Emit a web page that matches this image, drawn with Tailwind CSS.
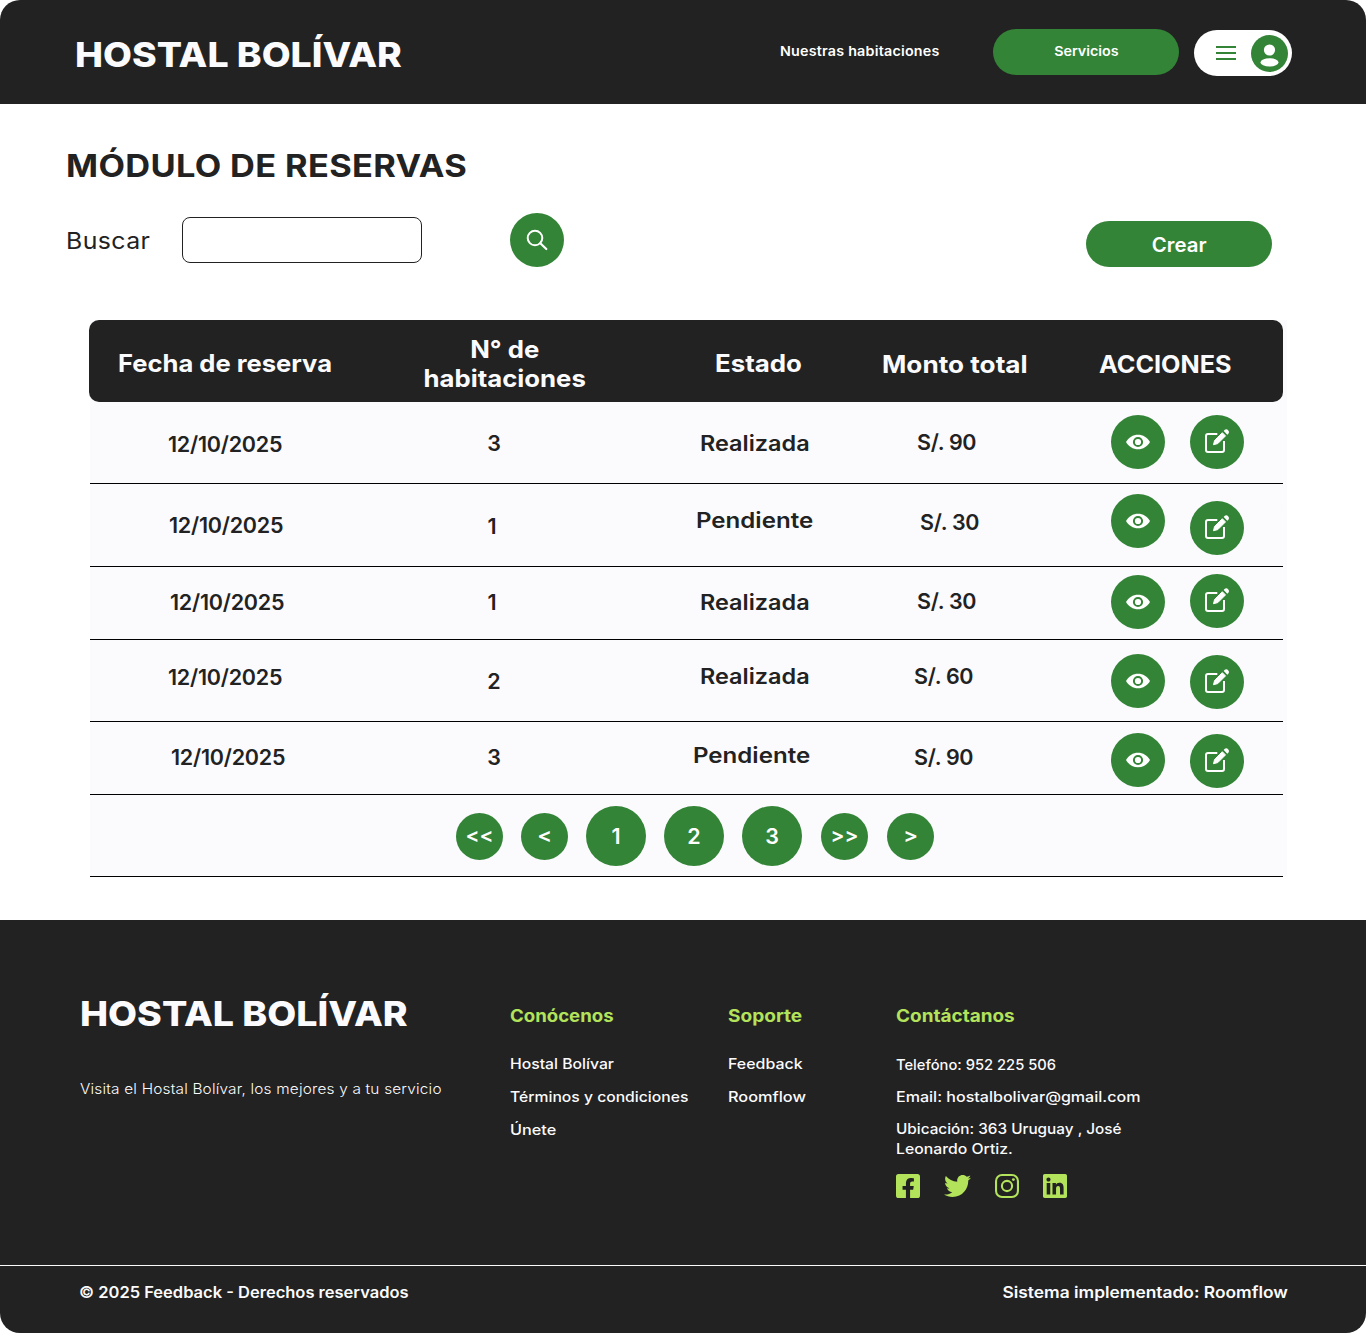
<!DOCTYPE html>
<html lang="es">
<head>
<meta charset="utf-8">
<title>Hostal Bolívar - Módulo de reservas</title>
<script src="https://cdn.jsdelivr.net/npm/@tailwindcss/browser@4"></script>
</head>
<body class="bg-white text-[#222222] font-[Inter,sans-serif]">

<!-- Shared row icons -->
<svg class="hidden" aria-hidden="true">
  <symbol id="eye" viewBox="0 0 54 54">
    <circle cx="27" cy="27" r="27" fill="#338437"/>
    <path d="M15 27C17.600 22.400 22 19.700 27 19.700S36.400 22.400 39 27C36.400 31.600 32 34.300 27 34.300S17.600 31.600 15 27Z" fill="#fff"/>
    <circle cx="27" cy="27" r="4.100" fill="#fff" stroke="#338437" stroke-width="2"/>
  </symbol>
  <symbol id="edit" viewBox="0 0 54 54">
    <circle cx="27" cy="27" r="27" fill="#338437"/>
    <path d="M27.300 19H18A2 2 0 0 0 16 21V35A2 2 0 0 0 18 37H32A2 2 0 0 0 34 35V26" fill="none" stroke="#fff" stroke-width="2"/>
    <path d="M23.500 29.700L24.600 25.400L32.300 17.700L35.500 20.900L27.800 28.600Z" fill="#fff" stroke="#fff" stroke-width="1" stroke-linejoin="round"/>
    <path d="M33.700 16.100L34.500 15.100A2.700 2.700 0 0 1 38.400 18.800L37.300 19.700Z" fill="#fff"/>
  </symbol>
</svg>

<div class="w-[1366px] h-[1333px] rounded-[20px] overflow-hidden flex flex-col bg-white">

  <header class="h-[104px] shrink-0 bg-[#222222] text-white flex items-start pl-[75px]">
    <h1 class="mt-[35px] w-[705px] text-[34.5px] leading-10 font-extrabold text-[#fbfbfe] whitespace-nowrap"><span class="inline-block origin-left scale-x-[1.085]">HOSTAL BOLÍVAR</span></h1>
    <a class="mt-[41px] w-[213px] text-[13.5px] leading-5 font-semibold whitespace-nowrap"><span class="inline-block origin-left scale-x-[1.06] tracking-[0.2px]">Nuestras habitaciones</span></a>
    <a class="mt-[29px] w-[186px] h-[46px] pb-0.5 rounded-full bg-[#338437] flex items-center justify-center text-[13.5px] font-semibold"><span class="inline-block scale-x-[1.06]">Servicios</span></a>
    <div class="mt-[30px] ml-[15px] w-[98px] h-[46px] rounded-full bg-white flex items-center justify-between pl-[22px] pr-[4.5px]">
      <svg class="w-5 h-[14px]" viewBox="0 0 20 14" fill="#338437"><rect width="20" height="2"/><rect y="6" width="20" height="2"/><rect y="12" width="20" height="2"/></svg>
      <svg class="size-[37px]" viewBox="0 0 37 37"><circle cx="18.500" cy="18.500" r="18.500" fill="#338437"/><circle cx="18.500" cy="15" r="5.600" fill="#fff"/><ellipse cx="18.500" cy="27.400" rx="9" ry="4.200" fill="#fff"/></svg>
    </div>
  </header>

  <main class="h-[816px] shrink-0">
    <h2 class="pt-[42px] pl-[66px] text-[31px] leading-10 font-bold"><span class="inline-block origin-left scale-x-[1.11] tracking-[0.3px]">MÓDULO DE RESERVAS</span></h2>

    <div class="mt-[23px] h-[111px] pl-[66px] flex items-start">
      <label class="mt-[17px] w-[116px] text-[23px] leading-[30px]"><span class="inline-block origin-left scale-x-[1.08] tracking-[0.4px]">Buscar</span></label>
      <input class="mt-2 w-[240px] h-[46px] border border-[#222222] rounded-lg bg-white">
      <button class="mt-1 ml-[88px] size-[54px] rounded-full bg-[#338437]">
        <svg viewBox="0 0 54 54" fill="none" stroke="#fff" stroke-width="2"><circle cx="25" cy="25" r="7.300"/><path d="M30.300 30.300L36.300 36" stroke-linecap="round" stroke-width="2.200"/></svg>
      </button>
      <button class="mt-3 ml-[522px] w-[186px] h-[46px] pt-[3px] rounded-full bg-[#338437] text-[19.5px] font-semibold text-white"><span class="inline-block scale-x-[1.045]">Crear</span></button>
    </div>

    <section class="ml-[89px] w-[1198px] bg-linear-to-r from-white from-[1px] to-[#fbfbfe] to-[1px]">
      <div class="w-[1194px] h-[82px] rounded-[10px] bg-[#222222] text-[#fbfbfe] text-[24px] leading-[29px] font-bold flex items-start whitespace-nowrap">
        <div class="mt-[29px] pl-[29px] w-[333px]"><span class="inline-block origin-left scale-x-[1.065]">Fecha de reserva</span></div>
        <div class="mt-[15px] w-[165px] text-center"><span class="inline-block scale-x-[1.072]">N° de<br>habitaciones</span></div>
        <div class="mt-[29px] ml-[128px] w-[167px]"><span class="inline-block origin-left scale-x-[1.076]">Estado</span></div>
        <div class="mt-[30px] w-[217px]"><span class="inline-block origin-left scale-x-[1.09]">Monto total</span></div>
        <div class="mt-[30px]"><span class="inline-block origin-left scale-x-[1.05]">ACCIONES</span></div>
      </div>

      <div class="ml-px w-[1193px] text-[21.5px] leading-[30px] font-semibold whitespace-nowrap">
        <div class="h-[82px] border-b border-black grid grid-cols-[332px_144px_290px_255px_79px_54px] items-start">
          <div class="pt-[27px] pl-[78px] tracking-[-0.23px]">12/10/2025</div>
          <div class="pt-[26px] text-center">3</div>
          <div class="pt-[26px] pl-[134px]"><span class="inline-block origin-left scale-x-[1.09]">Realizada</span></div>
          <div class="pt-[25px] pl-[61px] tracking-[-0.3px]">S/. 90</div>
          <svg class="mt-[13px] size-[54px]"><use href="#eye"/></svg>
          <svg class="mt-[13px] size-[54px]"><use href="#edit"/></svg>
        </div>
        <div class="h-[83px] border-b border-black grid grid-cols-[332px_144px_290px_255px_79px_54px] items-start">
          <div class="pt-[26px] pl-[79px] tracking-[-0.23px]">12/10/2025</div>
          <div class="pt-[27px] pr-1 text-center">1</div>
          <div class="pt-[21px] pl-[130px]"><span class="inline-block origin-left scale-x-[1.12]">Pendiente</span></div>
          <div class="pt-[23px] pl-[64px] tracking-[-0.3px]">S/. 30</div>
          <svg class="mt-[10px] size-[54px]"><use href="#eye"/></svg>
          <svg class="mt-[17px] size-[54px]"><use href="#edit"/></svg>
        </div>
        <div class="h-[73px] border-b border-black grid grid-cols-[332px_144px_290px_255px_79px_54px] items-start">
          <div class="pt-[20px] pl-[80px] tracking-[-0.23px]">12/10/2025</div>
          <div class="pt-[20px] pr-1 text-center">1</div>
          <div class="pt-[20px] pl-[134px]"><span class="inline-block origin-left scale-x-[1.09]">Realizada</span></div>
          <div class="pt-[19px] pl-[61px] tracking-[-0.3px]">S/. 30</div>
          <svg class="mt-[8px] size-[54px]"><use href="#eye"/></svg>
          <svg class="mt-[7px] size-[54px]"><use href="#edit"/></svg>
        </div>
        <div class="h-[82px] border-b border-black grid grid-cols-[332px_144px_290px_255px_79px_54px] items-start">
          <div class="pt-[22px] pl-[78px] tracking-[-0.23px]">12/10/2025</div>
          <div class="pt-[26px] text-center">2</div>
          <div class="pt-[21px] pl-[134px]"><span class="inline-block origin-left scale-x-[1.09]">Realizada</span></div>
          <div class="pt-[21px] pl-[58px] tracking-[-0.3px]">S/. 60</div>
          <svg class="mt-[14px] size-[54px]"><use href="#eye"/></svg>
          <svg class="mt-[15px] size-[54px]"><use href="#edit"/></svg>
        </div>
        <div class="h-[73px] border-b border-black grid grid-cols-[332px_144px_290px_255px_79px_54px] items-start">
          <div class="pt-[20px] pl-[81px] tracking-[-0.23px]">12/10/2025</div>
          <div class="pt-[20px] text-center">3</div>
          <div class="pt-[18px] pl-[127px]"><span class="inline-block origin-left scale-x-[1.12]">Pendiente</span></div>
          <div class="pt-[20px] pl-[58px] tracking-[-0.3px]">S/. 90</div>
          <svg class="mt-[11px] size-[54px]"><use href="#eye"/></svg>
          <svg class="mt-[12px] size-[54px]"><use href="#edit"/></svg>
        </div>
        <nav class="h-[82px] border-b border-black flex items-center gap-[18px] pl-[366px] pt-px text-white">
          <a class="size-[47px] pb-0.5 rounded-full bg-[#338437] flex items-center justify-center text-[20px]"><span class="inline-block scale-x-[1.04]">&lt;&lt;</span></a>
          <a class="size-[47px] pb-0.5 rounded-full bg-[#338437] flex items-center justify-center text-[20px]"><span class="inline-block scale-x-[1.1]">&lt;</span></a>
          <a class="size-[60px] rounded-full bg-[#338437] flex items-center justify-center">1</a>
          <a class="size-[60px] rounded-full bg-[#338437] flex items-center justify-center">2</a>
          <a class="size-[60px] rounded-full bg-[#338437] flex items-center justify-center">3</a>
          <a class="ml-px size-[47px] pb-0.5 rounded-full bg-[#338437] flex items-center justify-center text-[20px]"><span class="inline-block scale-x-[1.04]">&gt;&gt;</span></a>
          <a class="ml-px size-[47px] pb-0.5 rounded-full bg-[#338437] flex items-center justify-center text-[20px]"><span class="inline-block scale-x-[1.1]">&gt;</span></a>
        </nav>
      </div>
    </section>
  </main>

  <footer class="h-[413px] shrink-0 bg-[#222222] text-[#fbfbfe] flex flex-col">
    <div class="h-[345px] pl-20 flex items-start whitespace-nowrap text-[14.5px] leading-5 font-medium">
      <div class="w-[430px] pt-[74px]">
        <div class="text-[34.5px] leading-10 font-extrabold"><span class="inline-block origin-left scale-x-[1.088]">HOSTAL BOLÍVAR</span></div>
        <p class="mt-[45px] font-light"><span class="inline-block origin-left scale-x-[1.06] tracking-[0.18px]">Visita el Hostal Bolívar, los mejores y a tu servicio</span></p>
      </div>
      <div class="w-[218px] pt-[86px]">
        <h3 class="text-[17.5px] font-bold text-[#b3e25b]"><span class="inline-block origin-left scale-x-[1.063]">Conócenos</span></h3>
        <ul class="mt-7 flex flex-col gap-[13px]">
          <li><span class="inline-block origin-left scale-x-[1.085]">Hostal Bolívar</span></li>
          <li><span class="inline-block origin-left scale-x-[1.082]">Términos y condiciones</span></li>
          <li><span class="inline-block origin-left scale-x-[1.12]">Únete</span></li>
        </ul>
      </div>
      <div class="w-[168px] pt-[86px]">
        <h3 class="text-[17.5px] font-bold text-[#b3e25b]"><span class="inline-block origin-left scale-x-[1.09]">Soporte</span></h3>
        <ul class="mt-7 flex flex-col gap-[13px]">
          <li><span class="inline-block origin-left scale-x-[1.1]">Feedback</span></li>
          <li><span class="inline-block origin-left scale-x-[1.125]">Roomflow</span></li>
        </ul>
      </div>
      <div class="pt-[86px]">
        <h3 class="text-[17.5px] font-bold text-[#b3e25b]"><span class="inline-block origin-left scale-x-[1.083]">Contáctanos</span></h3>
        <div class="mt-[29px] flex flex-col gap-3">
          <p><span class="inline-block origin-left scale-x-[1.015]">Telefóno: 952 225 506</span></p>
          <p><span class="inline-block origin-left scale-x-[1.107]">Email: hostalbolivar@gmail.com</span></p>
          <p><span class="inline-block origin-left scale-x-[1.056]">Ubicación: 363 Uruguay , José</span><br><span class="inline-block origin-left scale-x-[1.088]">Leonardo Ortiz.</span></p>
        </div>
        <div class="mt-[15px] flex items-center gap-6 text-[#b3e25b]">
          <svg class="size-6" viewBox="0 32 448 448" fill="currentColor"><path d="M400 32H48A48 48 0 0 0 0 80v352a48 48 0 0 0 48 48h137.250V327.690h-63V256h63v-54.640c0-62.150 37-96.480 93.670-96.480 27.140 0 55.520 4.840 55.520 4.840v61h-31.270c-30.810 0-40.420 19.120-40.420 38.730V256h68.780l-11 71.690h-57.780V480H400a48 48 0 0 0 48-48V80a48 48 0 0 0-48-48z"/></svg>
          <svg class="w-[27px] h-[22px]" viewBox="0 48 512 416" fill="currentColor"><path d="M459.370 151.716c.325 4.548.325 9.097.325 13.645 0 138.720-105.583 298.558-298.558 298.558-59.452 0-114.680-17.219-161.137-47.106 8.447.974 16.568 1.299 25.340 1.299 49.055 0 94.213-16.568 130.274-44.832-46.132-.975-84.792-31.188-98.112-72.772 6.498.974 12.995 1.624 19.818 1.624 9.421 0 18.843-1.300 27.614-3.573-48.081-9.747-84.143-51.980-84.143-102.985v-1.299c13.969 7.797 30.214 12.670 47.431 13.319-28.264-18.843-46.781-51.005-46.781-87.391 0-19.492 5.197-37.360 14.294-52.954 51.655 63.675 129.300 105.258 216.365 109.807-1.624-7.797-2.599-15.918-2.599-24.040 0-57.828 46.782-104.934 104.934-104.934 30.213 0 57.502 12.670 76.670 33.137 23.715-4.548 46.456-13.320 66.599-25.340-7.798 24.366-24.366 44.833-46.132 57.827 21.117-2.273 41.584-8.122 60.426-16.243-14.292 20.791-32.161 39.308-52.628 54.253z"/></svg>
          <svg class="size-6" viewBox="0 0 24 24" fill="none" stroke="currentColor" stroke-width="2.100"><rect x="1.050" y="1.050" width="21.900" height="21.900" rx="6"/><circle cx="12" cy="12" r="5.100"/><circle cx="18.400" cy="5.600" r="1.450" fill="currentColor" stroke="none"/></svg>
          <svg class="size-6" viewBox="0 32 448 448" fill="currentColor"><path d="M416 32H31.900C14.300 32 0 46.500 0 64.300v383.400C0 465.500 14.300 480 31.900 480H416c17.600 0 32-14.500 32-32.300V64.300c0-17.800-14.400-32.300-32-32.300zM135.400 416H69V202.200h66.500V416zm-33.200-243c-21.300 0-38.500-17.300-38.500-38.500S80.900 96 102.200 96c21.200 0 38.500 17.300 38.500 38.500 0 21.300-17.200 38.500-38.500 38.500zm282.100 243h-66.400V312c0-24.800-.5-56.700-34.500-56.700-34.600 0-39.900 27-39.900 54.900V416h-66.400V202.200h63.700v29.200h.9c8.900-16.800 30.600-34.500 62.900-34.500 67.200 0 79.700 44.300 79.700 101.900V416z"/></svg>
        </div>
      </div>
    </div>
    <div class="h-[68px] border-t border-[#fbfbfe] pt-[15px] pl-[79px] pr-[78px] flex items-start justify-between text-[15.5px] leading-6 font-semibold">
      <span class="inline-block origin-left scale-x-[1.064]">© 2025 Feedback - Derechos reservados</span>
      <span class="inline-block origin-right scale-x-[1.12]">Sistema implementado: Roomflow</span>
    </div>
  </footer>
</div>
</body>
</html>
